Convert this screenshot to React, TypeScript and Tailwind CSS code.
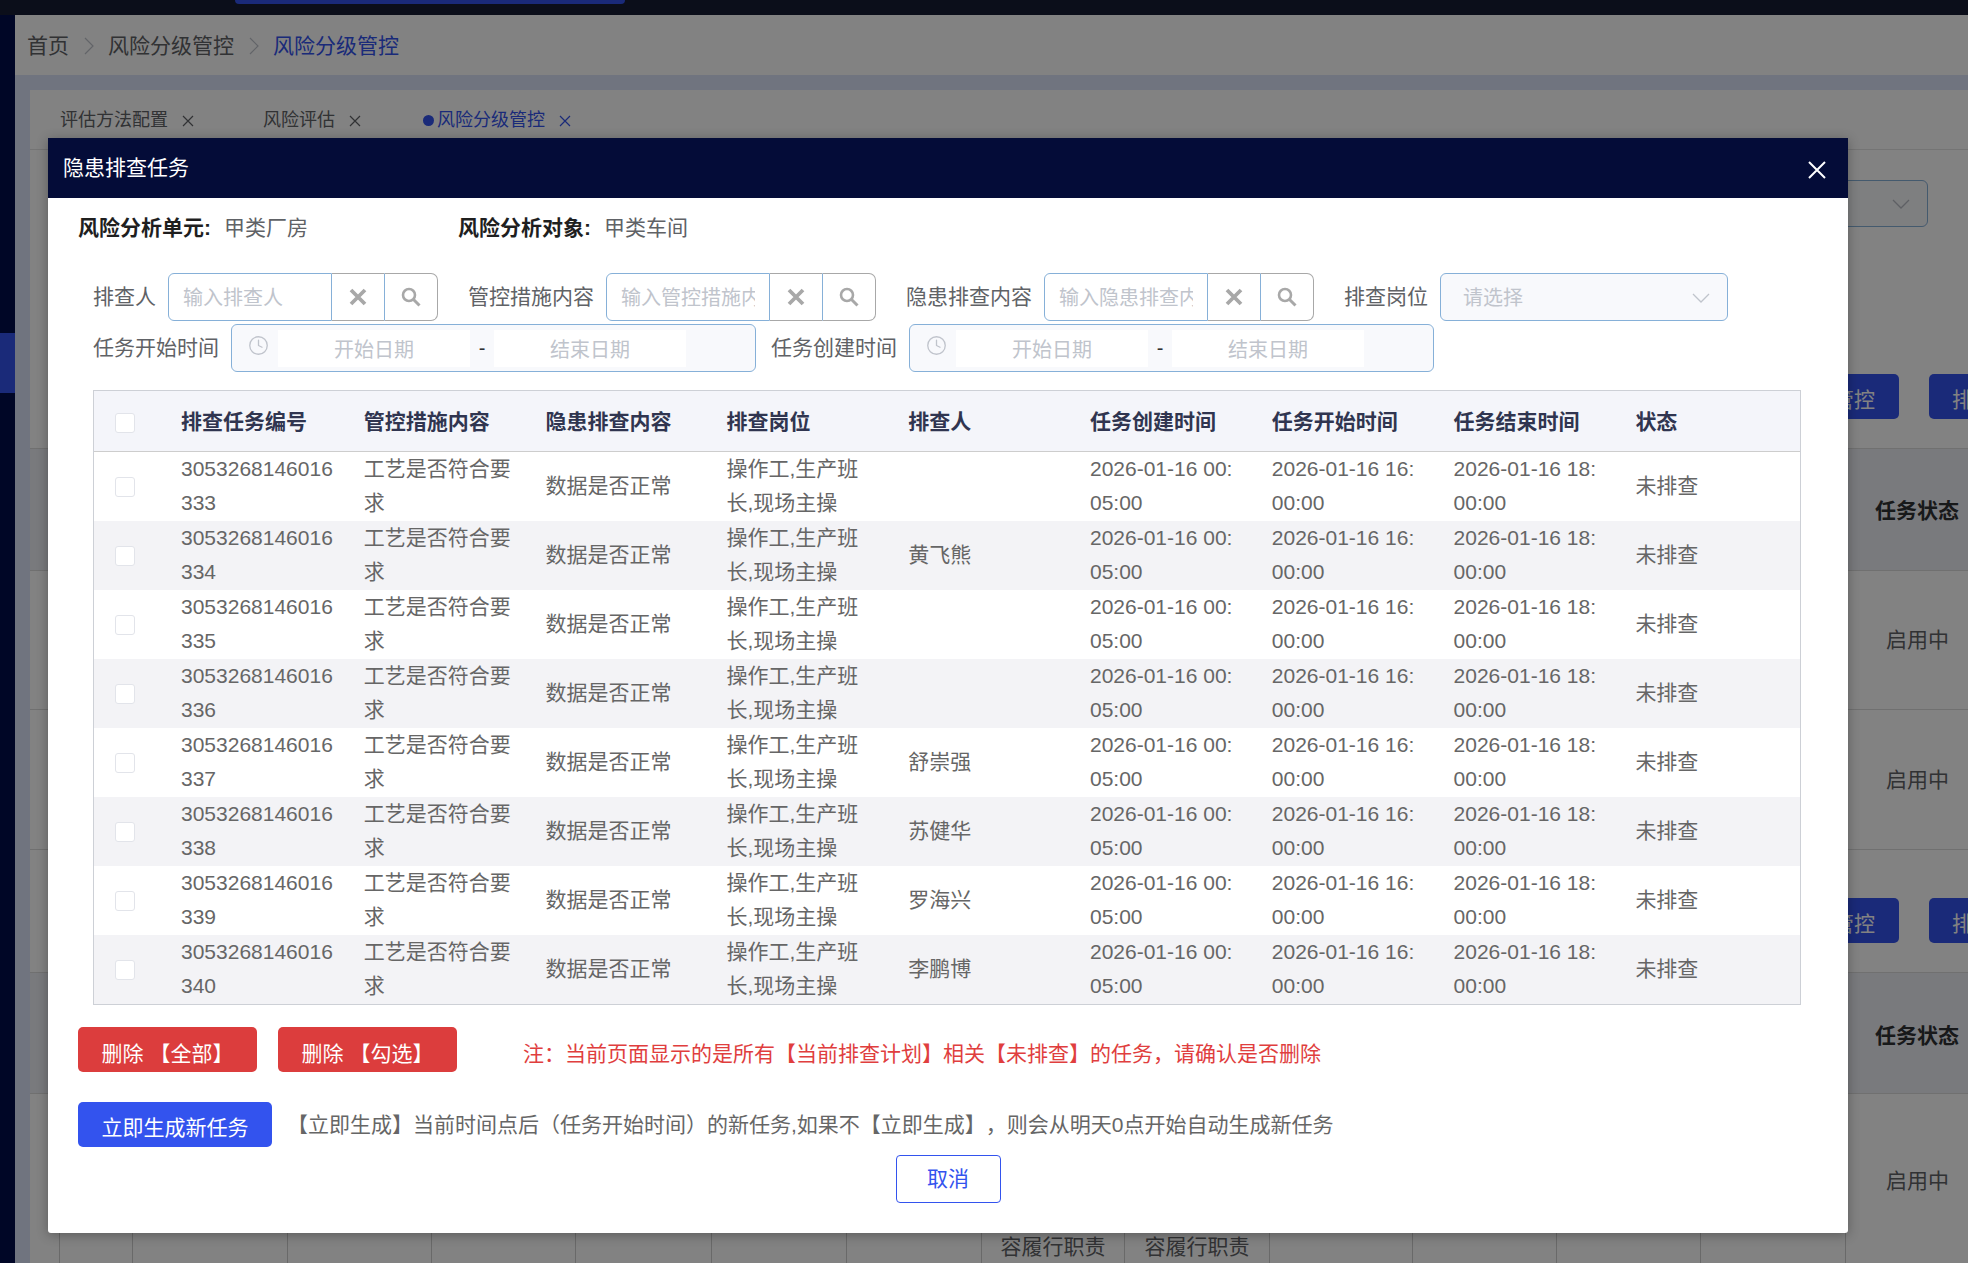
import { Clock } from "lucide-react"

const rows = [
    { no: "333", person: "" },
    { no: "334", person: "黄飞熊" },
    { no: "335", person: "" },
    { no: "336", person: "" },
    { no: "337", person: "舒崇强" },
    { no: "338", person: "苏健华" },
    { no: "339", person: "罗海兴" },
    { no: "340", person: "李鹏博" },
]

const columns = ["排查任务编号", "管控措施内容", "隐患排查内容", "排查岗位", "排查人", "任务创建时间", "任务开始时间", "任务结束时间", "状态"]

const bottomCells = [
    { w: "w-[30px]", text: "" },
    { w: "w-[73px]", text: "" },
    { w: "w-[155px]", text: "" },
    { w: "w-[144px]", text: "" },
    { w: "w-[144px]", text: "" },
    { w: "w-[136px]", text: "" },
    { w: "w-[135px]", text: "" },
    { w: "w-[135px]", text: "" },
    { w: "w-[143px]", text: "容履行职责" },
    { w: "w-[145px]", text: "容履行职责" },
    { w: "w-[143px]", text: "" },
    { w: "w-[144px]", text: "" },
    { w: "w-[144px]", text: "" },
    { w: "w-[145px]", text: "" },
]

function Checkbox() {
    return <span className="block w-[20px] h-[20px] bg-white border border-[#e2e4ea] rounded-[3px]" />
}

function Chevron(props: { className?: string }) {
    return (
        <svg width="18" height="10" viewBox="0 0 18 10" className={props.className}>
            <path d="M1 1 L9 9 L17 1" stroke="currentColor" strokeWidth="1.3" fill="none" />
        </svg>
    )
}

function Crumb() {
    return (
        <svg width="10" height="18" viewBox="0 0 10 18" className="mx-[14.5px] text-[#c0c4cc]">
            <path d="M1 1 L9 9 L1 17" stroke="currentColor" strokeWidth="1.2" fill="none" />
        </svg>
    )
}

function TabClose() {
    return (
        <svg width="12" height="12" viewBox="0 0 12 12" className="ml-[14px]">
            <path d="M1 1 L11 11 M11 1 L1 11" stroke="currentColor" strokeWidth="1.2" fill="none" />
        </svg>
    )
}

function SearchInput(props: { label: string; placeholder: string }) {
    return (
        <div className="flex items-center gap-[12px]">
            <label className="text-[#606266] whitespace-nowrap">{props.label}</label>
            <div className="flex h-[48px] w-[270px]">
                <input
                    className="w-[164px] h-full border border-[#86b0d8] rounded-l-[6px] pl-[14px] pr-[14px] pt-[2px] text-[20px] outline-none placeholder:text-[#c0c4cc]"
                    placeholder={props.placeholder}
                />
                <div className="w-[52px] flex items-center justify-center border-y border-[#a8a8a8]">
                    <svg width="18" height="18" viewBox="0 0 18 18">
                        <path d="M2 2 L16 16 M16 2 L2 16" stroke="#a8a8a8" strokeWidth="3.8" fill="none" />
                    </svg>
                </div>
                <div className="flex-1 flex items-center justify-center border border-[#a8a8a8] border-l-[#86b0d8] rounded-r-[7px]">
                    <svg width="20" height="20" viewBox="0 0 20 20">
                        <circle cx="8" cy="8" r="6" stroke="#a8a8a8" strokeWidth="2.6" fill="none" />
                        <path d="M12.5 12.5 L18.5 18.5" stroke="#a8a8a8" strokeWidth="3" fill="none" />
                    </svg>
                </div>
            </div>
        </div>
    )
}

function DateRange(props: { label: string }) {
    return (
        <div className="flex items-center gap-[12px]">
            <label className="text-[#606266] whitespace-nowrap">{props.label}</label>
            <div className="flex items-center h-[48px] w-[525px] border border-[#86b0d8] rounded-[6px] bg-[#f8f9fc] pl-[16px]">
                <Clock size={21} strokeWidth={1.5} className="text-[#c0c4cc] -mt-[6px]" />
                <input
                    className="ml-[9px] w-[192px] h-[37px] bg-white text-center text-[20px] pt-[4px] outline-none placeholder:text-[#c0c4cc]"
                    placeholder="开始日期"
                />
                <span className="w-[24px] text-center text-[20px] text-[#303133]">-</span>
                <input
                    className="w-[192px] h-[37px] bg-white text-center text-[20px] pt-[4px] outline-none placeholder:text-[#c0c4cc]"
                    placeholder="结束日期"
                />
            </div>
        </div>
    )
}

function BackButtons() {
    return (
        <div className="flex justify-end gap-[30px] overflow-hidden">
            <span className="h-[45px] rounded-[5px] bg-[#3353ee] text-white text-[21px] leading-[45px] pt-[3px] pl-[24px] pr-[24px] whitespace-nowrap">管控</span>
            <span className="h-[45px] w-[39px] rounded-l-[5px] bg-[#3353ee] text-white text-[21px] leading-[45px] pt-[3px] pl-[23px] overflow-hidden">排</span>
        </div>
    )
}

export default function App() {
    return (
        <div className="relative h-[1263px] overflow-hidden bg-white text-[21px] font-['Liberation_Sans','Noto_Sans_CJK_SC',sans-serif] [text-spacing-trim:space-all]">
            {/* page behind the dialog */}
            <div className="h-[15px] bg-[#161d33] pl-[235px]">
                <div className="w-[390px] h-[4px] rounded-b-[6px] bg-[#3353ee]" />
            </div>
            <div className="flex h-[1248px]">
                <div className="w-[15px] bg-[#000c4b] pt-[318px]">
                    <div className="h-[60px] bg-[#3353ee]" />
                </div>
                <div className="flex-1 min-w-0 flex flex-col">
                    <div className="h-[60px] shrink-0 bg-white flex items-center pl-[12px] pt-[2px] text-[#606266]">
                        <span>首页</span>
                        <Crumb />
                        <span>风险分级管控</span>
                        <Crumb />
                        <span className="text-[#3353ee]">风险分级管控</span>
                    </div>
                    <div className="flex-1 min-h-0 bg-[#dce3f9] pt-[15px] pl-[15px]">
                        <div className="h-full bg-white flex flex-col">
                            <div className="h-[60px] shrink-0 border-b border-[#e4e4e4] flex items-center pl-[30px] pt-[2px] text-[18px] text-[#606266]">
                                <span>评估方法配置</span>
                                <TabClose />
                                <span className="ml-[69px]">风险评估</span>
                                <TabClose />
                                <span className="ml-[62px] w-[11px] h-[11px] rounded-full bg-[#3353ee]" />
                                <span className="ml-[3px] text-[#3353ee]">风险分级管控</span>
                                <span className="text-[#3353ee]"><TabClose /></span>
                            </div>
                            <div className="h-[224px] shrink-0 pt-[30px] flex justify-end pr-[40px]">
                                <div className="w-[300px] h-[47px] border border-[#86b0d8] rounded-[6px] bg-[#f8f9fc] flex items-center justify-end pr-[17px]">
                                    <Chevron className="text-[#b8bcc4]" />
                                </div>
                            </div>
                            <div className="h-[75px] shrink-0 border-b border-[#dcdcdc]">
                                <BackButtons />
                            </div>
                            <div className="h-[122px] shrink-0 border-b border-[#dcdcdc] bg-[#eef0f6] flex items-center justify-end pr-[9px] pt-[3px]">
                                <span className="font-bold text-[#303133]">任务状态</span>
                            </div>
                            <div className="h-[139px] shrink-0 border-b border-[#dcdcdc] flex items-center justify-end pr-[19px] text-[#606266]">启用中</div>
                            <div className="h-[140px] shrink-0 border-b border-[#dcdcdc] flex items-center justify-end pr-[19px] text-[#606266]">启用中</div>
                            <div className="h-[123px] shrink-0 border-b border-[#dcdcdc] pt-[48px]">
                                <BackButtons />
                            </div>
                            <div className="h-[121px] shrink-0 border-b border-[#dcdcdc] bg-[#eef0f6] flex items-center justify-end pr-[9px] pt-[6px]">
                                <span className="font-bold text-[#303133]">任务状态</span>
                            </div>
                            <div className="h-[174px] shrink-0 flex">
                                {bottomCells.map((c, i) => (
                                    <div key={i} className={`${c.w} shrink-0 border-r border-[#cfcfcf] flex items-end justify-center pb-[6px] whitespace-nowrap text-[#606266]`}>
                                        {c.text}
                                    </div>
                                ))}
                                <div className="flex-1 flex items-center pl-[40px] text-[#606266] whitespace-nowrap">启用中</div>
                            </div>
                        </div>
                    </div>
                </div>
            </div>

            <div className="absolute inset-0 bg-black/[0.49]" />

            {/* dialog */}
            <div className="absolute left-[48px] top-[138px] w-[1800px] h-[1095px] bg-white rounded-b-[3px] shadow-[0_2px_12px_rgba(0,0,0,0.3)] flex flex-col">
                <div className="h-[60px] shrink-0 bg-[#040c38] flex items-center justify-between pl-[15px] pr-[21px] text-white">
                    <span>隐患排查任务</span>
                    <svg width="20" height="20" viewBox="0 0 20 20" className="mt-[3px]">
                        <path d="M2 2 L18 18 M18 2 L2 18" stroke="white" strokeWidth="2" fill="none" />
                    </svg>
                </div>

                <div className="flex items-center pl-[30px] mt-[13px] h-[34px]">
                    <div className="flex w-[380px]">
                        <span className="font-bold text-[#1f1f1f] w-[146px]">风险分析单元:</span>
                        <span className="text-[#606266]">甲类厂房</span>
                    </div>
                    <div className="flex">
                        <span className="font-bold text-[#1f1f1f] w-[146px]">风险分析对象:</span>
                        <span className="text-[#606266]">甲类车间</span>
                    </div>
                </div>

                <div className="pl-[45px] mt-[28px]">
                    <div className="flex gap-[30px]">
                        <SearchInput label="排查人" placeholder="输入排查人" />
                        <SearchInput label="管控措施内容" placeholder="输入管控措施内容" />
                        <SearchInput label="隐患排查内容" placeholder="输入隐患排查内容" />
                        <div className="flex items-center gap-[12px]">
                            <label className="text-[#606266] whitespace-nowrap">排查岗位</label>
                            <div className="w-[288px] h-[48px] border border-[#86b0d8] rounded-[6px] bg-[#f8f9fc] flex items-center justify-between pl-[22px] pr-[17px] pt-[2px] text-[20px] text-[#c0c4cc]">
                                <span>请选择</span>
                                <Chevron />
                            </div>
                        </div>
                    </div>
                    <div className="flex gap-[15px] mt-[3px]">
                        <DateRange label="任务开始时间" />
                        <DateRange label="任务创建时间" />
                    </div>

                    <div className="w-[1708px] mt-[18px] border border-[#cdd0d6]">
                        <div className="grid grid-cols-[72px_repeat(8,181.8px)_1fr] h-[61px] pt-[1px] bg-[#f4f5fa] border-b border-[#cdcdcd] items-center font-bold text-[#303550]">
                            <div className="pl-[21px] pt-[2px]"><Checkbox /></div>
                            {columns.map((c, i) => (
                                <div key={c} className={i === 1 || i === 2 ? "pl-[16px]" : "pl-[15px]"}>{c}</div>
                            ))}
                        </div>
                        {rows.map((r, i) => (
                            <div
                                key={r.no}
                                className={`grid grid-cols-[72px_repeat(8,181.8px)_1fr] h-[69px] pb-[2px] items-center leading-[34px] text-[#666666] whitespace-pre-line ${i % 2 === 1 ? "bg-[#f3f3f6]" : "bg-white"}`}
                            >
                                <div className="pl-[21px] pt-[2px]"><Checkbox /></div>
                                <div className="pl-[15px]">{`3053268146016\n${r.no}`}</div>
                                <div className="pl-[16px]">{"工艺是否符合要\n求"}</div>
                                <div className="pl-[16px]">数据是否正常</div>
                                <div className="pl-[15px]">{"操作工,生产班\n长,现场主操"}</div>
                                <div className="pl-[15px]">{r.person}</div>
                                <div className="pl-[15px]">{"2026-01-16 00:\n05:00"}</div>
                                <div className="pl-[15px]">{"2026-01-16 16:\n00:00"}</div>
                                <div className="pl-[15px]">{"2026-01-16 18:\n00:00"}</div>
                                <div className="pl-[15px]">未排查</div>
                            </div>
                        ))}
                    </div>
                </div>

                <div className="flex items-center pl-[30px] mt-[22px]">
                    <button className="w-[179px] h-[45px] rounded-[5px] bg-[#dc3d3d] text-white pt-[8px]">删除 【全部】</button>
                    <button className="w-[179px] h-[45px] rounded-[5px] bg-[#dc3d3d] text-white pt-[8px] ml-[21px]">删除 【勾选】</button>
                    <span className="ml-[66px] text-[#e03e3e] pt-[8px]">注：当前页面显示的是所有【当前排查计划】相关【未排查】的任务，请确认是否删除</span>
                </div>

                <div className="flex items-center pl-[30px] mt-[30px]">
                    <button className="w-[194px] h-[45px] rounded-[5px] bg-[#3353ee] text-white pt-[6px]">立即生成新任务</button>
                    <span className="ml-[15px] text-[#666666]">【立即生成】当前时间点后（任务开始时间）的新任务,如果不【立即生成】，则会从明天0点开始自动生成新任务</span>
                </div>

                <div className="flex justify-center mt-[8px]">
                    <button className="w-[105px] h-[48px] rounded-[4px] border border-[#3353ee] text-[#3353ee]">取消</button>
                </div>
            </div>
        </div>
    )
}
